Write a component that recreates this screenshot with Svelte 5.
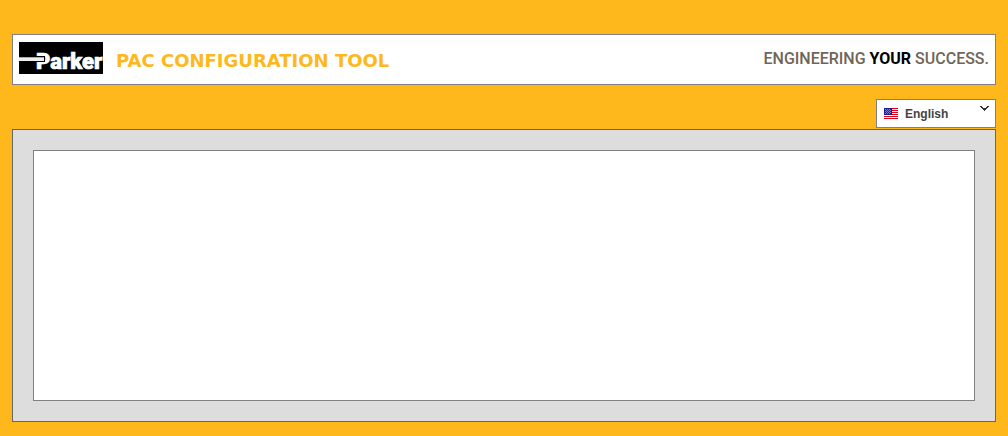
<script>
  let language = $state('en');
  const stripes = [0, 2, 4, 6, 8, 10];
</script>

<div class="page">
  <header>
    <svg class="logo" viewBox="0 0 84 32" role="img" aria-label="Parker">
      <rect width="84" height="32" fill="#000" />
      <text class="wordmark" x="17" y="27">Parker</text>
      <rect x="0" y="14" width="26" height="6" fill="#000" />
      <rect x="0" y="15" width="25" height="1" fill="#aaa" />
      <rect x="0" y="16" width="25" height="3" fill="#eee" />
    </svg>
    <h1>PAC CONFIGURATION TOOL</h1>
    <p class="tagline">ENGINEERING <strong>YOUR</strong> SUCCESS.</p>
  </header>

  <div class="toolbar">
    <div class="language">
      <select aria-label="Language" bind:value={language}>
        <option value="en">English</option>
      </select>
      <svg class="flag" viewBox="0 0 14 11" shape-rendering="crispEdges" aria-hidden="true">
        <rect width="14" height="11" fill="#fff" />
        {#each stripes as y}
          <rect x="0" {y} width="14" height="1" fill="#e00016" />
        {/each}
        <rect width="8" height="7" fill="#1c1c94" />
        <path d="M1 1h1v1h-1zM3 1h1v1h-1zM5 1h1v1h-1zM2 2h1v1h-1zM4 2h1v1h-1zM6 2h1v1h-1zM1 3h1v1h-1zM3 3h1v1h-1zM5 3h1v1h-1zM2 4h1v1h-1zM4 4h1v1h-1zM6 4h1v1h-1zM1 5h1v1h-1zM3 5h1v1h-1zM5 5h1v1h-1z" fill="#8585cc" />
      </svg>
      <svg class="arrow" viewBox="0 0 9 5" shape-rendering="crispEdges" aria-hidden="true">
        <path d="M0 0h2v1h1v1h3v-1h1v-1h2v1h-1v1h-1v1h-1v1h-1v1h-1v-1h-1v-1h-1v-1h-1v-1h-1z" fill="#333" />
      </svg>
    </div>
  </div>

  <main>
    <section></section>
  </main>
</div>

<style>
  :global(body) {
    background: #ffb81c;
  }
  .page {
    box-sizing: border-box;
    min-height: 100vh;
    padding: 34px 12px 14px;
    display: flex;
    flex-direction: column;
    font-family: "Liberation Sans", Arial, sans-serif;
  }
  header {
    display: flex;
    align-items: center;
    padding: 7px 6px 10px;
    background: #fff;
    border: 1px solid #808080;
  }
  .logo {
    width: 84px;
    height: 32px;
    flex: none;
  }
  .wordmark {
    font: 900 22px "Roboto", sans-serif;
    fill: #fff;
    stroke: #fff;
    stroke-width: 0.7px;
  }
  h1 {
    margin: 6px 0 0 13px;
    font: bold 18px/24px Verdana, "DejaVu Sans", sans-serif;
    color: #ffb81c;
  }
  .tagline {
    margin: 2px 0 0 auto;
    font: 500 16px/24px "Roboto", sans-serif;
    color: #716558;
    white-space: nowrap;
  }
  .tagline strong {
    font-weight: 700;
    color: #000;
  }
  .toolbar {
    display: flex;
    justify-content: flex-end;
    padding: 14px 0 1px;
  }
  .language {
    position: relative;
    display: flex;
  }
  select {
    appearance: none;
    width: 120px;
    height: 29px;
    margin: 0;
    padding: 0 24px 0 28px;
    border: 1px solid #808080;
    border-radius: 0;
    background: #fff;
    color: #444;
    font: bold 12px "Liberation Sans", Arial, sans-serif;
  }
  .flag {
    position: absolute;
    left: 8px;
    top: 9px;
    width: 14px;
    height: 11px;
    pointer-events: none;
  }
  .arrow {
    position: absolute;
    right: 7px;
    top: 7px;
    width: 9px;
    height: 5px;
    pointer-events: none;
  }
  main {
    flex: 1;
    display: flex;
    padding: 20px;
    background: #ddd;
    border: 1px solid #666;
  }
  section {
    flex: 1;
    background: #fff;
    border: 1px solid #808080;
  }
</style>
